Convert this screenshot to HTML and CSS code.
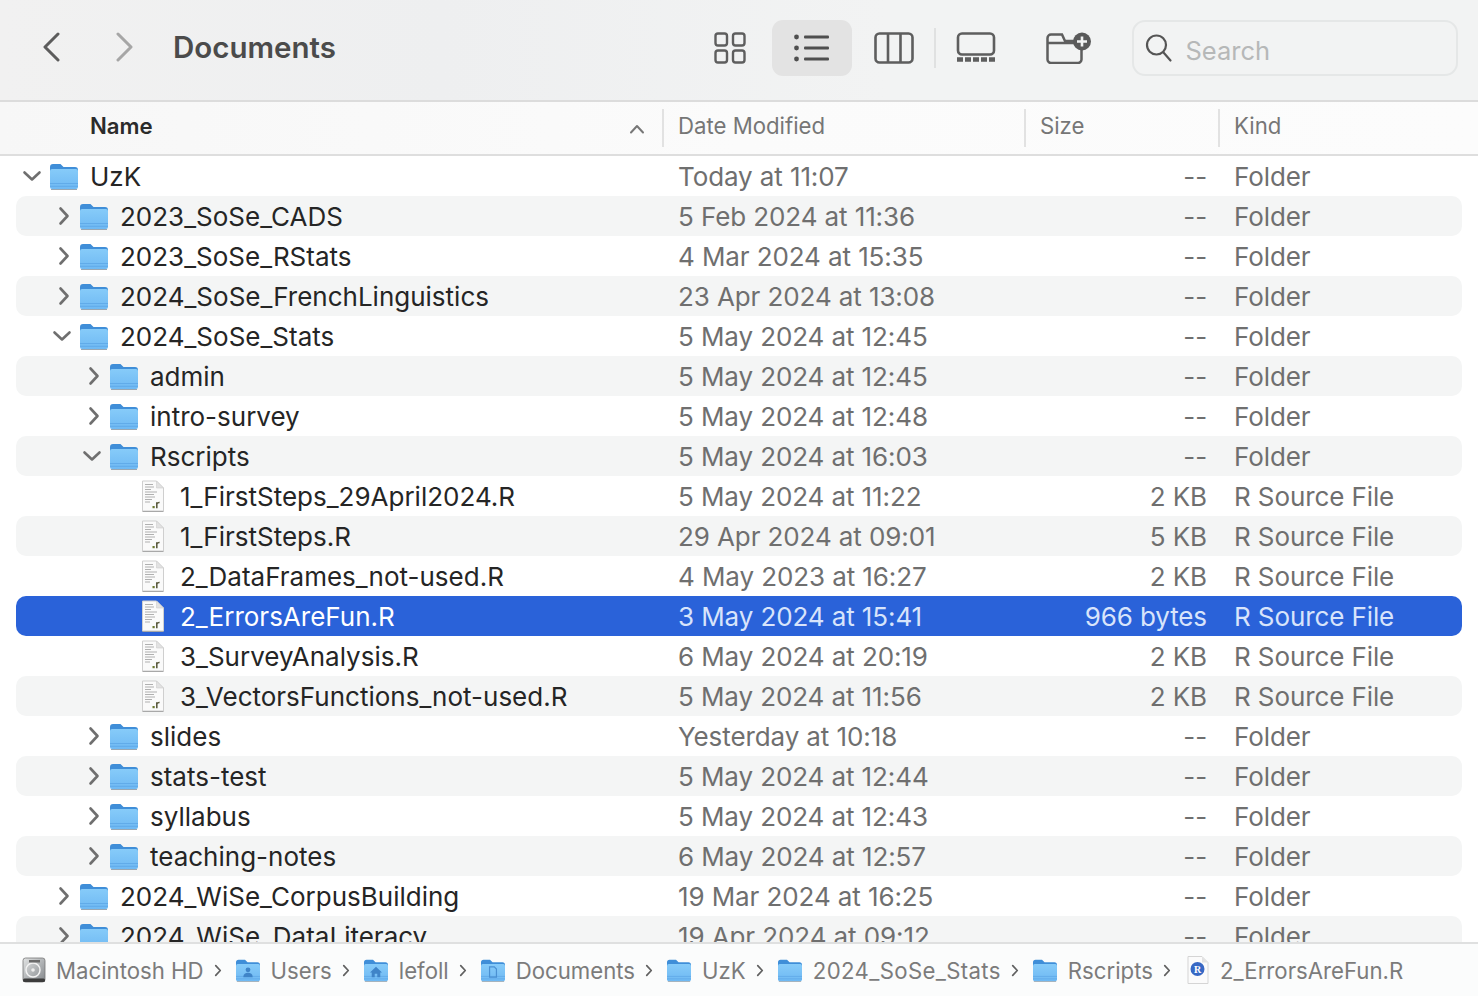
FILE: index.html
```html
<!DOCTYPE html>
<html lang="en">
<head>
<meta charset="utf-8">
<title>Documents</title>
<link rel="stylesheet" href="styles.css">
</head>
<body>
<svg class="sprite" aria-hidden="true">
  <defs>
    <linearGradient id="fg" x1="0" y1="0" x2="0" y2="1"><stop offset="0" stop-color="#86cbf9"/><stop offset="1" stop-color="#6fb9f3"/></linearGradient>
    <linearGradient id="disk" x1="0" y1="0" x2="1" y2="1"><stop offset="0" stop-color="#e2e4e4"/><stop offset="1" stop-color="#82868a"/></linearGradient>
    <symbol id="folder" viewBox="0 0 30 28">
      <path d="M1 5a3 3 0 0 1 3-3h7.500l3 3h11.500a3 3 0 0 1 3 3v8H1z" fill="#3f8ed8"/>
      <rect x="1" y="7" width="28" height="20" rx="2" fill="url(#fg)"/>
      <path d="M1 21.500h28M1 24.300h28" stroke="#5ca6e6" stroke-width=".8"/>
      <path d="M2 27.500h26" stroke="#9aa6b0" stroke-width="1"/>
    </symbol>
    <symbol id="file" viewBox="0 0 26 32">
      <path d="M2.500 1h14l7 7v23h-21z" fill="#fafafa" stroke="#cfcfcf"/>
      <path d="M16.500 1v7h7z" fill="#e2e2e2" stroke="#cfcfcf" stroke-width=".6"/>
      <path d="M2.500 31.500h21" stroke="#a8a8a8" stroke-width="1"/>
      <path d="M5 4.500h8M5 7h9M5 9.500h6M5 12h12M5 14.500h9M5 17h10M5 19.500h7M5 22h5" stroke="#b0b0b0" stroke-width="1.100"/>
      <rect x="12.500" y="26" width="2.200" height="2.200" fill="#6c7a33"/>
      <path d="M16.800 28.200v-6M16.800 24c.6-1.300 1.600-1.600 2.800-1.500" stroke="#5c5c40" stroke-width="1.600" fill="none"/>
    </symbol>
    <symbol id="chev-r" viewBox="0 0 12 20"><path d="M2.500 2.500L9.500 10l-7 7.500" fill="none" stroke="currentColor" stroke-width="2.600" stroke-linecap="round" stroke-linejoin="round"/></symbol>
    <symbol id="chev-d" viewBox="0 0 20 12"><path d="M2.500 2.500L10 9.500l7.500-7" fill="none" stroke="currentColor" stroke-width="2.600" stroke-linecap="round" stroke-linejoin="round"/></symbol>
  </defs>
</svg>

<div class="window">
  <header class="toolbar">
    <svg class="nav back" viewBox="0 0 18 30"><path d="M16 2L3 15l13 13" fill="none" stroke="currentColor" stroke-width="3" stroke-linecap="round" stroke-linejoin="round"/></svg>
    <svg class="nav forward" viewBox="0 0 18 30"><path d="M2 2l13 13L2 28" fill="none" stroke="currentColor" stroke-width="3" stroke-linecap="round" stroke-linejoin="round"/></svg>
    <h1 class="title">Documents</h1>
    <div class="tools">
      <span class="tool tool-grid"><svg width="32" height="32" viewBox="0 0 32 32" fill="none" stroke="#5e5e5e" stroke-width="2.400"><rect x="1.500" y="1.500" width="11.500" height="12" rx="2.500"/><rect x="19" y="1.500" width="11.500" height="12" rx="2.500"/><rect x="1.500" y="18.500" width="11.500" height="12" rx="2.500"/><rect x="19" y="18.500" width="11.500" height="12" rx="2.500"/></svg></span>
      <span class="tool tool-list"><svg width="36" height="28" viewBox="0 0 36 28" fill="#4f4f4f"><circle cx="2.500" cy="3" r="2.400"/><circle cx="2.500" cy="14" r="2.400"/><circle cx="2.500" cy="25" r="2.400"/><rect x="10" y="1.500" width="25" height="3" rx="1"/><rect x="10" y="12.500" width="25" height="3" rx="1"/><rect x="10" y="23.500" width="25" height="3" rx="1"/></svg></span>
      <span class="tool tool-cols"><svg width="40" height="32" viewBox="0 0 40 32" fill="none" stroke="#5e5e5e" stroke-width="2.600"><rect x="1.500" y="1.500" width="37" height="29" rx="4"/><path d="M14 1.500v29M26.500 1.500v29"/></svg></span>
      <span class="divider"></span>
      <span class="tool tool-gallery"><svg width="40" height="32" viewBox="0 0 40 32"><rect x="2" y="1.500" width="36" height="21" rx="4" fill="none" stroke="#5e5e5e" stroke-width="2.600"/><path d="M1 27.500h38" stroke="#5e5e5e" stroke-width="4.600" stroke-dasharray="6 2"/></svg></span>
      <span class="tool tool-new"><svg width="46" height="32" viewBox="0 0 46 32"><path d="M28 9H19l-3-6.500H5a3.500 3.500 0 0 0-3.500 3.500v21.500A3.500 3.500 0 0 0 5 31h27a3.500 3.500 0 0 0 3.500-3.500V17M2 11h26" fill="none" stroke="#5e5e5e" stroke-width="2.500"/><circle cx="36" cy="9.500" r="9" fill="#5a5a5a"/><path d="M36 4.500v10M31 9.500h10" stroke="#f2f3f3" stroke-width="2.600"/></svg></span>
    </div>
    <div class="search">
      <svg width="28" height="30" viewBox="0 0 28 30" fill="none" stroke="#555" stroke-width="2.200"><circle cx="11.500" cy="12" r="9.500"/><path d="M18.500 19.500l7 8" stroke-linecap="round"/></svg>
      <span class="search-text">Search</span>
    </div>
  </header>

  <div class="columns">
    <div class="col col-name"><span>Name</span><svg class="sort" width="16" height="10" viewBox="0 0 16 10"><path d="M2 8.500L8 2l6 6.500" fill="none" stroke="#777" stroke-width="2" stroke-linecap="round" stroke-linejoin="round"/></svg></div>
    <div class="col col-date">Date Modified</div>
    <div class="col col-size">Size</div>
    <div class="col col-kind">Kind</div>
  </div>

  <main class="list">
    <div class="row"><div class="name l0"><svg class="tw down"><use href="#chev-d"/></svg><svg class="ico"><use href="#folder"/></svg><span>UzK</span></div><div class="date">Today at 11:07</div><div class="size">--</div><div class="kind">Folder</div></div>
    <div class="row"><div class="name l1"><svg class="tw"><use href="#chev-r"/></svg><svg class="ico"><use href="#folder"/></svg><span>2023_SoSe_CADS</span></div><div class="date">5 Feb 2024 at 11:36</div><div class="size">--</div><div class="kind">Folder</div></div>
    <div class="row"><div class="name l1"><svg class="tw"><use href="#chev-r"/></svg><svg class="ico"><use href="#folder"/></svg><span>2023_SoSe_RStats</span></div><div class="date">4 Mar 2024 at 15:35</div><div class="size">--</div><div class="kind">Folder</div></div>
    <div class="row"><div class="name l1"><svg class="tw"><use href="#chev-r"/></svg><svg class="ico"><use href="#folder"/></svg><span>2024_SoSe_FrenchLinguistics</span></div><div class="date">23 Apr 2024 at 13:08</div><div class="size">--</div><div class="kind">Folder</div></div>
    <div class="row"><div class="name l1"><svg class="tw down"><use href="#chev-d"/></svg><svg class="ico"><use href="#folder"/></svg><span>2024_SoSe_Stats</span></div><div class="date">5 May 2024 at 12:45</div><div class="size">--</div><div class="kind">Folder</div></div>
    <div class="row"><div class="name l2"><svg class="tw"><use href="#chev-r"/></svg><svg class="ico"><use href="#folder"/></svg><span>admin</span></div><div class="date">5 May 2024 at 12:45</div><div class="size">--</div><div class="kind">Folder</div></div>
    <div class="row"><div class="name l2"><svg class="tw"><use href="#chev-r"/></svg><svg class="ico"><use href="#folder"/></svg><span>intro-survey</span></div><div class="date">5 May 2024 at 12:48</div><div class="size">--</div><div class="kind">Folder</div></div>
    <div class="row"><div class="name l2"><svg class="tw down"><use href="#chev-d"/></svg><svg class="ico"><use href="#folder"/></svg><span>Rscripts</span></div><div class="date">5 May 2024 at 16:03</div><div class="size">--</div><div class="kind">Folder</div></div>
    <div class="row"><div class="name l3"><svg class="doc"><use href="#file"/></svg><span>1_FirstSteps_29April2024.R</span></div><div class="date">5 May 2024 at 11:22</div><div class="size">2 KB</div><div class="kind">R Source File</div></div>
    <div class="row"><div class="name l3"><svg class="doc"><use href="#file"/></svg><span>1_FirstSteps.R</span></div><div class="date">29 Apr 2024 at 09:01</div><div class="size">5 KB</div><div class="kind">R Source File</div></div>
    <div class="row"><div class="name l3"><svg class="doc"><use href="#file"/></svg><span>2_DataFrames_not-used.R</span></div><div class="date">4 May 2023 at 16:27</div><div class="size">2 KB</div><div class="kind">R Source File</div></div>
    <div class="row selected"><div class="name l3"><svg class="doc"><use href="#file"/></svg><span>2_ErrorsAreFun.R</span></div><div class="date">3 May 2024 at 15:41</div><div class="size">966 bytes</div><div class="kind">R Source File</div></div>
    <div class="row"><div class="name l3"><svg class="doc"><use href="#file"/></svg><span>3_SurveyAnalysis.R</span></div><div class="date">6 May 2024 at 20:19</div><div class="size">2 KB</div><div class="kind">R Source File</div></div>
    <div class="row"><div class="name l3"><svg class="doc"><use href="#file"/></svg><span>3_VectorsFunctions_not-used.R</span></div><div class="date">5 May 2024 at 11:56</div><div class="size">2 KB</div><div class="kind">R Source File</div></div>
    <div class="row"><div class="name l2"><svg class="tw"><use href="#chev-r"/></svg><svg class="ico"><use href="#folder"/></svg><span>slides</span></div><div class="date">Yesterday at 10:18</div><div class="size">--</div><div class="kind">Folder</div></div>
    <div class="row"><div class="name l2"><svg class="tw"><use href="#chev-r"/></svg><svg class="ico"><use href="#folder"/></svg><span>stats-test</span></div><div class="date">5 May 2024 at 12:44</div><div class="size">--</div><div class="kind">Folder</div></div>
    <div class="row"><div class="name l2"><svg class="tw"><use href="#chev-r"/></svg><svg class="ico"><use href="#folder"/></svg><span>syllabus</span></div><div class="date">5 May 2024 at 12:43</div><div class="size">--</div><div class="kind">Folder</div></div>
    <div class="row"><div class="name l2"><svg class="tw"><use href="#chev-r"/></svg><svg class="ico"><use href="#folder"/></svg><span>teaching-notes</span></div><div class="date">6 May 2024 at 12:57</div><div class="size">--</div><div class="kind">Folder</div></div>
    <div class="row"><div class="name l1"><svg class="tw"><use href="#chev-r"/></svg><svg class="ico"><use href="#folder"/></svg><span>2024_WiSe_CorpusBuilding</span></div><div class="date">19 Mar 2024 at 16:25</div><div class="size">--</div><div class="kind">Folder</div></div>
    <div class="row"><div class="name l1"><svg class="tw"><use href="#chev-r"/></svg><svg class="ico"><use href="#folder"/></svg><span>2024_WiSe_DataLiteracy</span></div><div class="date">19 Apr 2024 at 09:12</div><div class="size">--</div><div class="kind">Folder</div></div>
  </main>

  <footer class="pathbar">
    <span class="crumb"><svg class="crumb-ico" width="24" height="26" viewBox="0 0 24 26"><rect x="1" y="1" width="22" height="24" rx="2.500" fill="url(#disk)" stroke="#777" stroke-width=".8"/><circle cx="11" cy="13" r="7" fill="none" stroke="#f2f2f2" stroke-width="1.500"/><circle cx="11" cy="13" r="1.800" fill="#eee"/><rect x="7" y="3" width="11" height="2.500" fill="#6a6a6a"/><rect x="1" y="21.500" width="22" height="3.500" rx="1.500" fill="#3c3c3c"/></svg><span>Macintosh HD</span></span>
    <svg class="sep"><use href="#chev-r"/></svg>
    <span class="crumb"><span class="folder-wrap"><svg class="crumb-folder"><use href="#folder"/></svg><svg class="badge" viewBox="0 0 14 14" fill="#3f84c8"><circle cx="7" cy="4.500" r="2.800"/><path d="M1.500 13c0-3.500 2.500-5 5.500-5s5.500 1.500 5.500 5z"/></svg></span><span>Users</span></span>
    <svg class="sep"><use href="#chev-r"/></svg>
    <span class="crumb"><span class="folder-wrap"><svg class="crumb-folder"><use href="#folder"/></svg><svg class="badge" viewBox="0 0 14 14" fill="#3f84c8"><path d="M7 1L0 7.500h2V13h3.500V9h3v4H12V7.500h2z"/></svg></span><span>lefoll</span></span>
    <svg class="sep"><use href="#chev-r"/></svg>
    <span class="crumb"><span class="folder-wrap"><svg class="crumb-folder"><use href="#folder"/></svg><svg class="badge" viewBox="0 0 14 14" fill="none" stroke="#4a90d2" stroke-width="1.400"><path d="M3 1h5.500L11 3.500V13H3z"/></svg></span><span>Documents</span></span>
    <svg class="sep"><use href="#chev-r"/></svg>
    <span class="crumb"><svg class="crumb-folder"><use href="#folder"/></svg><span>UzK</span></span>
    <svg class="sep"><use href="#chev-r"/></svg>
    <span class="crumb crumb-wide"><svg class="crumb-folder"><use href="#folder"/></svg><span>2024_SoSe_Stats</span></span>
    <svg class="sep"><use href="#chev-r"/></svg>
    <span class="crumb"><svg class="crumb-folder"><use href="#folder"/></svg><span>Rscripts</span></span>
    <svg class="sep"><use href="#chev-r"/></svg>
    <span class="crumb crumb-file"><svg class="crumb-ico" width="22" height="28" viewBox="0 0 22 28"><path d="M1 .5h14l6 6v21H1z" fill="#fbfbfb" stroke="#d5d5d5"/><path d="M15 .5v6h6z" fill="#e2e2e2"/><circle cx="10.500" cy="13" r="7" fill="#3768c4"/><text x="10.500" y="16.500" class="r-mark">R</text></svg><span>2_ErrorsAreFun.R</span></span>
  </footer>
</div>
</body>
</html>
```

FILE: styles.css
```css
* { box-sizing: border-box; }
html, body { margin: 0; padding: 0; height: 100%; overflow: hidden; background: #fff; }
body { font-family: Inter, "Liberation Sans", sans-serif; }
.sprite { position: absolute; width: 0; height: 0; overflow: hidden; }
.window { display: flex; flex-direction: column; width: 1478px; height: 996px; }

.toolbar {
  flex: 0 0 102px; display: flex; align-items: center;
  padding: 0 20px 6px 42px;
  background: linear-gradient(90deg, #f1f1f1, #eeeff0 30%, #f2f3f3 60%, #f2f3f3);
  border-bottom: 2px solid #dcdcdc;
}
.nav { width: 18px; height: 30px; flex: none; }
.back { color: #5c5c5c; }
.forward { color: #a6a6a6; margin-left: 56px; }
.title { margin: 0 0 0 39px; font-size: 29.500px; font-weight: 600; color: #4b4b4b; width: 380px; white-space: nowrap; }
.tools { display: flex; align-items: center; margin: 2px 0 0 162px; }
.tool { display: flex; align-items: center; justify-content: center; height: 56px; }
.tool-grid { width: 32px; }
.tool-list { width: 80px; margin-left: 26px; background: #e3e3e3; border-radius: 11px; }
.tool-cols { width: 40px; margin-left: 22px; }
.divider { width: 2px; height: 40px; background: #e0e1e1; margin: 0 20px; }
.tool-gallery { width: 40px; }
.tool-new { width: 46px; margin-left: 50px; }
.search {
  margin: 2px 0 0 40px; width: 326px; height: 56px; display: flex; align-items: center; gap: 12px;
  padding-left: 11px; border: 2px solid #e5e7e7; border-radius: 13px;
}
.search-text { font-size: 25.500px; color: #b6b8b8; padding-top: 5px; }

.columns {
  flex: 0 0 54px; display: grid; grid-template-columns: 662px 362px 194px 1fr; align-items: center;
  font-size: 22.200px; color: #767676; background: linear-gradient(90deg, #f7f7f7, #fbfbfb 50%, #fcfcfc);
  border-bottom: 2px solid #dedede;
}
.col { height: 38px; display: flex; align-items: center; border-left: 2px solid #e2e2e2; padding: 0 0 5px 14px; }
.col-name { border-left: 0; padding: 0 17px 5px 90px; justify-content: space-between; color: #2b2b2b; font-weight: 600; }
.sort { margin-top: 6px; }

.list { flex: 1 1 0; min-height: 0; overflow: hidden; font-size: 26px; color: #6f6f6f; }
.row {
  height: 40px; margin: 0 16px; display: grid; grid-template-columns: 646px 363px 182px 1fr;
  align-items: center; border-radius: 10px; white-space: nowrap;
}
.row:nth-child(even) { background: #f4f5f5; }
.row.selected { background: #2a62d9; color: #d8e4fb; }
.row.selected .name { color: #fff; }
.name { display: flex; align-items: center; color: #252525; height: 40px; }
.l0 { padding-left: 8px; }
.l1 { padding-left: 38px; }
.l2 { padding-left: 68px; }
.l3 { padding-left: 98px; }
.tw { width: 12px; height: 20px; margin: 0 9px 0 4px; color: #6f6f6f; flex: none; }
.tw.down { width: 20px; height: 12px; margin: 0 7px 0 -2px; }
.ico { width: 30px; height: 28px; margin-right: 11px; flex: none; }
.doc { width: 26px; height: 32px; margin: 0 14px 0 26px; flex: none; }
.date, .size, .kind { letter-spacing: -.1px; }
.date { padding-left: 16px; }
.size { text-align: right; }
.kind { padding-left: 27px; }

.pathbar {
  flex: 0 0 54px; display: flex; align-items: center; padding-left: 22px;
  background: #fbfcfc; border-top: 2px solid #dfe0e0; font-size: 22.200px; color: #7b7b7b; white-space: nowrap;
}
.crumb { display: flex; align-items: center; gap: 10px; }
.crumb-ico { flex: none; }
.crumb-folder { width: 26px; height: 24px; display: block; flex: none; }
.folder-wrap { position: relative; display: block; width: 26px; height: 24px; }
.badge { position: absolute; left: 7px; top: 8px; width: 12px; height: 12px; }
.sep { width: 8px; height: 13px; margin: 0 13px 0 10px; color: #606060; flex: none; }
.crumb-wide { letter-spacing: .35px; }
.crumb-file { margin-left: 3px; gap: 11px; }
.r-mark { font-family: "Liberation Serif", serif; font-size: 10px; font-weight: 700; fill: #fff; text-anchor: middle; }
```
